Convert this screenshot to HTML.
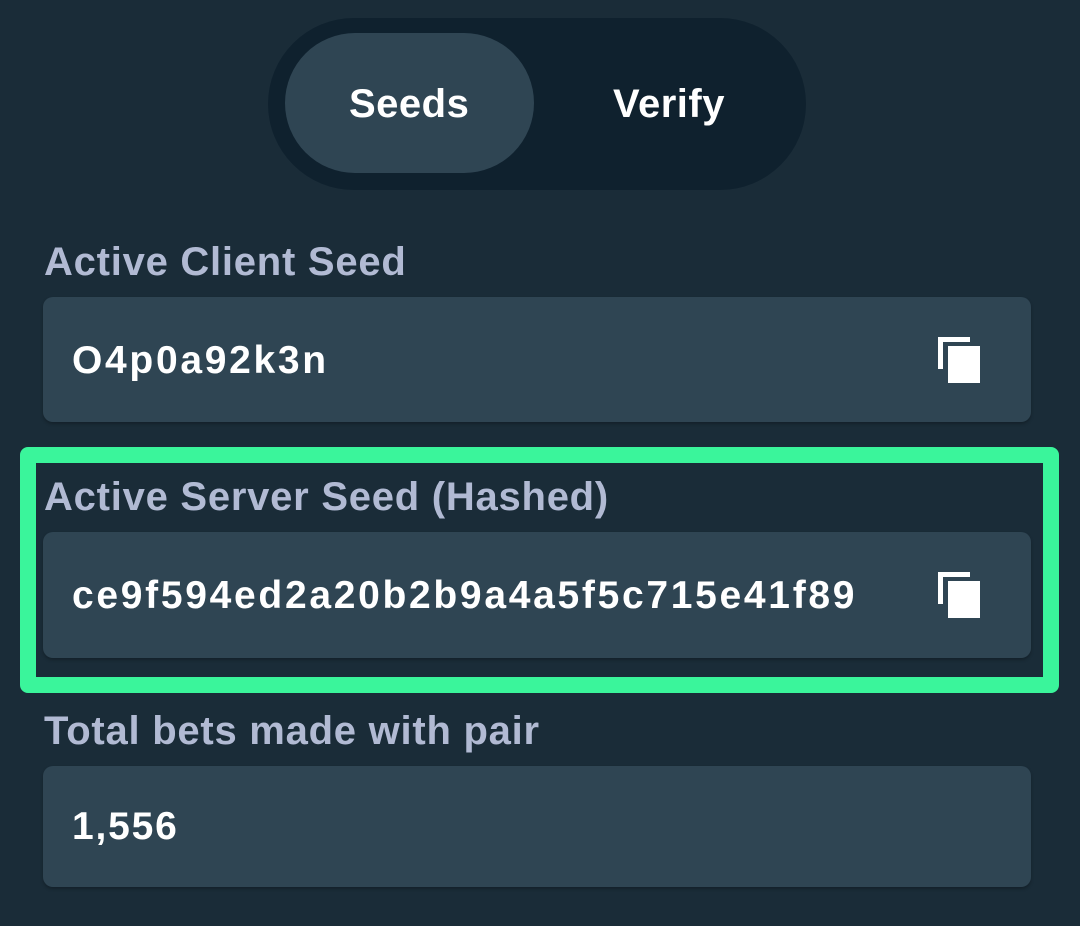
<!DOCTYPE html>
<html><head><meta charset="utf-8"><style>
*{margin:0;padding:0;box-sizing:border-box}
body{width:1080px;height:926px;background:#1a2c38;font-family:"Liberation Sans",sans-serif;position:relative;overflow:hidden}
.abs{position:absolute}
.toggle{left:268px;top:18px;width:538px;height:172px;border-radius:86px;background:#0f212e}
.pill{left:285px;top:33px;width:249px;height:140px;border-radius:70px;background:#2f4553}
.tt{color:#fff;font-weight:bold;font-size:40px;line-height:40px;letter-spacing:0.5px}
.label{color:#b1bad3;font-weight:bold;font-size:40px;line-height:40px;left:44px;letter-spacing:0.75px}
.inp{left:43px;width:988px;background:#2f4553;border-radius:10px;box-shadow:0 2px 3px rgba(0,0,0,.25)}
.val{color:#fff;font-weight:bold;font-size:39px;line-height:40px;left:72px;letter-spacing:2.7px}
.green{left:20px;top:447px;width:1039px;height:246px;border:16px solid #3af59b;border-radius:8px}
</style></head><body>
<div class="abs toggle"></div>
<div class="abs pill"></div>
<div class="abs tt" style="left:349px;top:84px">Seeds</div>
<div class="abs tt" style="left:613px;top:84px">Verify</div>

<div class="abs label" style="top:242px">Active Client Seed</div>
<div class="abs inp" style="top:297px;height:125px"></div>
<div class="abs val" style="top:341px">O4p0a92k3n</div>

<div class="abs green"></div>
<div class="abs label" style="top:477px">Active Server Seed (Hashed)</div>
<div class="abs inp" style="top:532px;height:126px"></div>
<div class="abs val" style="top:576px">ce9f594ed2a20b2b9a4a5f5c715e41f89</div>

<div class="abs label" style="top:711px">Total bets made with pair</div>
<div class="abs inp" style="top:766px;height:121px"></div>
<div class="abs val" style="top:807px;letter-spacing:1.8px">1,556</div>

<svg class="abs" style="left:936px;top:336px" width="46" height="48" viewBox="0 0 46 48">
<path d="M2 1h32v5H7v27H2z" fill="#fff"/><rect x="12" y="10" width="32" height="37" fill="#fff"/></svg>
<svg class="abs" style="left:936px;top:571px" width="46" height="48" viewBox="0 0 46 48">
<path d="M2 1h32v5H7v27H2z" fill="#fff"/><rect x="12" y="10" width="32" height="37" fill="#fff"/></svg>
</body></html>
